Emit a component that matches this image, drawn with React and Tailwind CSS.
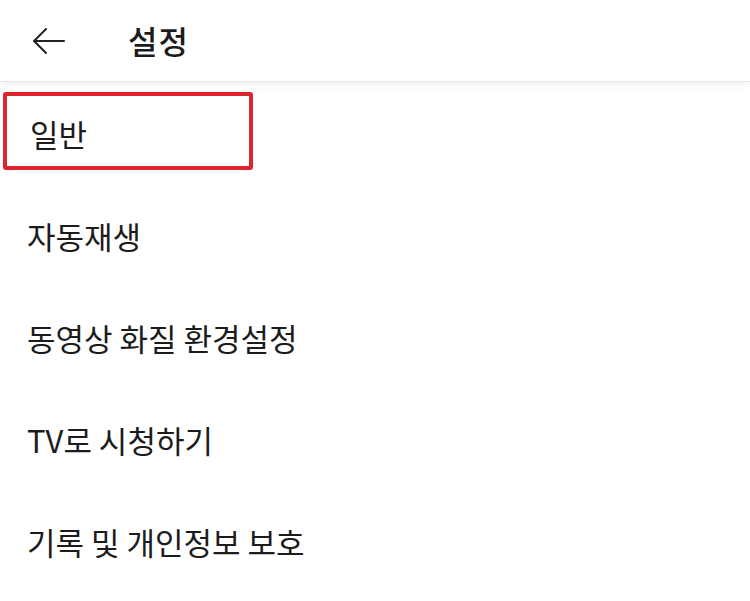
import React from 'react';

const items = ['자동재생', '동영상 화질 환경설정', 'TV로 시청하기', '기록 및 개인정보 보호'];

export default function App() {
  return (
    <div className="w-[750px] h-[601px] bg-white overflow-hidden text-[#1c1c1c]" style={{ fontFamily: '"Noto Sans CJK KR", "Noto Sans", sans-serif' }}>
      {/* Header */}
      <header className="h-[82px] flex items-center border-b border-[#e6e6e6] shadow-[0_3px_8px_rgba(0,0,0,0.06)]">
        <button className="ml-[31px] w-[36px] h-[36px] flex items-center justify-center">
          <svg width="34" height="28" viewBox="0 0 34 28" fill="none" stroke="#222" strokeWidth="2" strokeLinecap="round" strokeLinejoin="round">
            <path d="M32 14H3M14 2L2 14l12 12" />
          </svg>
        </button>
        <h1 className="ml-[61px] -mt-[2px] text-[32px] font-medium tracking-[1px]">설정</h1>
      </header>

      {/* List */}
      <div className="pt-[10px]">
        <div className="ml-[3px] w-[250px] h-[78px] border-[4px] border-[#e0242f] rounded-[3px] flex items-center pl-[23px] pt-[6px]">
          <span className="text-[31px]">일반</span>
        </div>
        <div className="mt-[15px]">
          {items.map((label) => (
            <div key={label} className="h-[102px] flex items-center pl-[27px]">
              <span className="text-[31px]">{label}</span>
            </div>
          ))}
        </div>
      </div>
    </div>
  );
}
